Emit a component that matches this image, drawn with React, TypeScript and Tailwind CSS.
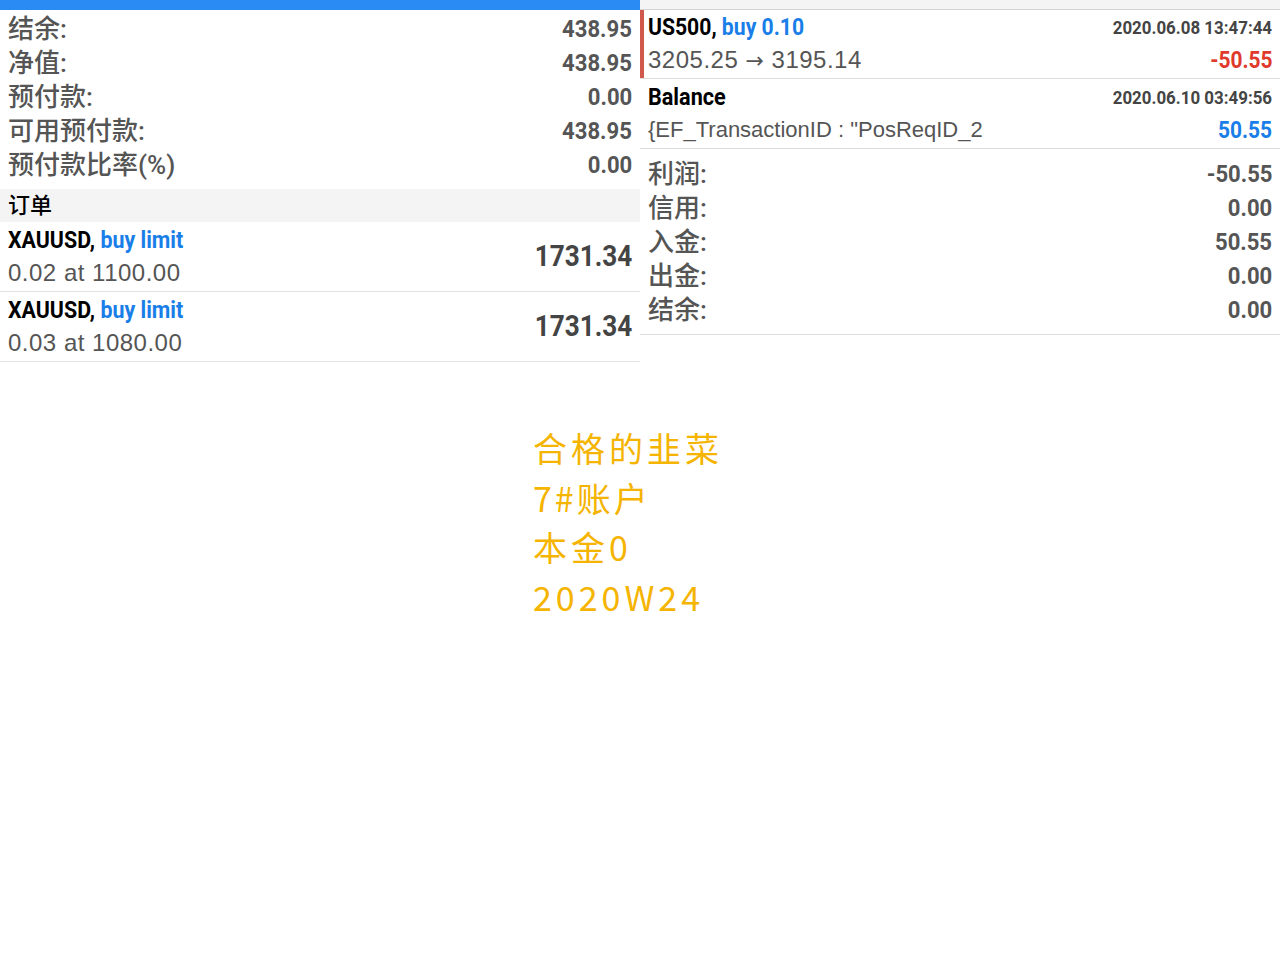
import type { ReactNode } from "react";

const CJK = "font-['Roboto','Noto_Sans_CJK_SC',sans-serif]";
const NUM = "font-['Roboto',sans-serif] font-bold";
const TXT = "font-['Liberation_Sans','Noto_Sans_CJK_SC',sans-serif]";

const ACCOUNT = [
  { label: "结余:", value: "438.95" },
  { label: "净值:", value: "438.95" },
  { label: "预付款:", value: "0.00" },
  { label: "可用预付款:", value: "438.95" },
  { label: "预付款比率(%)", value: "0.00" },
];

const ORDERS = [
  { symbol: "XAUUSD,", type: "buy limit", detail: "0.02 at 1100.00", price: "1731.34" },
  { symbol: "XAUUSD,", type: "buy limit", detail: "0.03 at 1080.00", price: "1731.34" },
];

const TOTALS = [
  { label: "利润:", value: "-50.55" },
  { label: "信用:", value: "0.00" },
  { label: "入金:", value: "50.55" },
  { label: "出金:", value: "0.00" },
  { label: "结余:", value: "0.00" },
];

// condensed bold look: Roboto squeezed horizontally
function NarrowR({ className, children }: { className: string; children: ReactNode }) {
  return <span className={`${NUM} inline-block origin-right ${className}`}>{children}</span>;
}
function NarrowL({ className, children }: { className: string; children: ReactNode }) {
  return <span className={`${NUM} inline-block origin-left ${className}`}>{children}</span>;
}

function SummaryRow({ label, value }: { label: string; value: string }) {
  return (
    <div className="flex h-[34px] items-center justify-between">
      <span className={`${CJK} text-[26px] font-medium text-[#555]`}>{label}</span>
      <NarrowR className="scale-x-[0.92] text-[24px] text-[#555]">{value}</NarrowR>
    </div>
  );
}

export default function App() {
  return (
    <div className="min-h-[959px] w-[1280px] bg-white">
      <div className="flex">
        {/* Left: account + orders */}
        <div className="w-[640px]">
          <div className="h-[10px] bg-[#2b8bf4]" />
          <div className="pt-[2px] pl-2 pr-[8px]">
            {ACCOUNT.map((r) => (
              <SummaryRow key={r.label} {...r} />
            ))}
          </div>
          <div className={`mt-[7px] flex h-[33px] items-center bg-[#f4f4f4] px-2 ${CJK} text-[22px] font-medium text-black`}>
            订单
          </div>
          {ORDERS.map((o, i) => (
            <div key={i} className="flex h-[70px] items-center justify-between border-b border-[#e2e2e2] pl-2 pr-[8px]">
              <div className="flex flex-col leading-[32px]">
                <NarrowL className="scale-x-[0.93] text-[23px]">
                  <span className="text-black">{o.symbol} </span>
                  <span className="text-[#1a7ee8]">{o.type}</span>
                </NarrowL>
                <div className={`${TXT} text-[24px] tracking-[0.5px] text-[#555]`}>{o.detail}</div>
              </div>
              <NarrowR className="scale-x-[0.9] text-[29px] text-[#444]">{o.price}</NarrowR>
            </div>
          ))}
        </div>

        {/* Right: history */}
        <div className="w-[640px]">
          <div className="h-[10px] border-b border-[#d4d4d4] bg-[#f4f4f4]" />
          <div className="flex h-[69px] border-b border-[#dcdcdc]">
            <div className="w-[4px] bg-[#d0594b]" />
            <div className="flex flex-1 flex-col justify-center pl-[4px] pr-[8px] leading-[32px]">
              <div className="flex items-center justify-between">
                <NarrowL className="scale-x-[0.92] text-[23px]">
                  <span className="text-black">US500, </span>
                  <span className="text-[#1a7ee8]">buy 0.10</span>
                </NarrowL>
                <NarrowR className="scale-x-[0.89] text-[19px] text-[#444]">2020.06.08 13:47:44</NarrowR>
              </div>
              <div className="flex items-center justify-between">
                <span className={`${TXT} text-[24px] tracking-[0.5px] text-[#555]`}>
                  3205.25 <span className="font-['DejaVu_Sans',sans-serif] text-[22px]">→</span> 3195.14
                </span>
                <NarrowR className="scale-x-[0.87] text-[24px] text-[#e03a2c]">-50.55</NarrowR>
              </div>
            </div>
          </div>
          <div className="flex h-[70px] flex-col justify-center border-b border-[#dcdcdc] pl-2 pr-[8px] leading-[32px]">
            <div className="flex items-center justify-between">
              <NarrowL className="scale-x-[0.94] text-[23px] text-black">Balance</NarrowL>
              <NarrowR className="scale-x-[0.89] text-[19px] text-[#444]">2020.06.10 03:49:56</NarrowR>
            </div>
            <div className="flex items-center justify-between">
              <span className={`${TXT} text-[22px] text-[#555]`}>{'{EF_TransactionID : "PosReqID_2'}</span>
              <NarrowR className="scale-x-[0.87] text-[24px] text-[#1a7ee8]">50.55</NarrowR>
            </div>
          </div>
          <div className="border-b border-[#dcdcdc] pt-[8px] pb-[7px] pl-2 pr-[8px]">
            {TOTALS.map((r) => (
              <SummaryRow key={r.label} {...r} />
            ))}
          </div>
        </div>
      </div>

      {/* Watermark note */}
      <div className="ml-[533px] mt-[61px] font-['Noto_Sans_CJK_SC',sans-serif] text-[34px] leading-[49.5px] tracking-[4px] text-[#f5b400]">
        <div>合格的韭菜</div>
        <div className="tracking-[3px]">7#账户</div>
        <div>本金0</div>
        <div>2020W24</div>
      </div>
    </div>
  );
}
